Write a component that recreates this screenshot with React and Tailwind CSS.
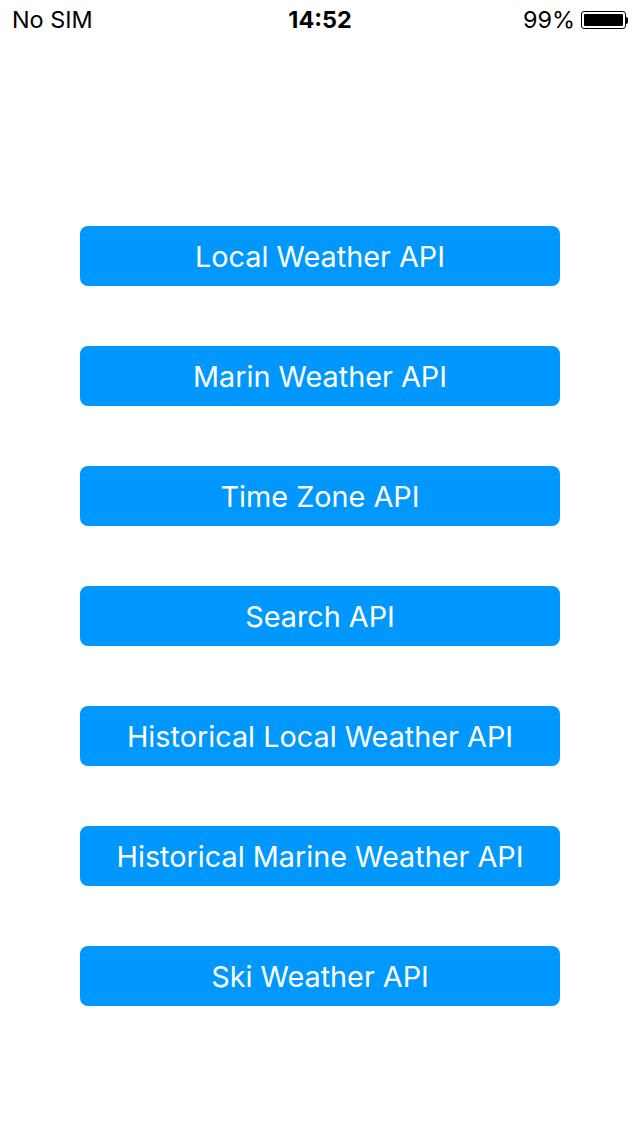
import React from 'react'

const apis = [
  'Local Weather API',
  'Marin Weather API',
  'Time Zone API',
  'Search API',
  'Historical Local Weather API',
  'Historical Marine Weather API',
  'Ski Weather API',
]

function Battery() {
  return (
    <div className="flex items-center">
      <div className="w-[45px] h-[18px] rounded-[3px] border border-black p-[2px]">
        <div className="w-full h-full bg-black rounded-[1px]" />
      </div>
      <div className="w-[2px] h-[7px] bg-black rounded-r-sm" />
    </div>
  )
}

export default function App() {
  return (
    <div className="w-[640px] h-[1136px] bg-white font-['Inter','Liberation_Sans',sans-serif] text-black">
      <div className="h-[40px] flex items-center justify-between px-[12px] text-[23.4px] relative">
        <span className="leading-none">No SIM</span>
        <span className="absolute left-1/2 -translate-x-1/2 font-bold leading-none">14:52</span>
        <div className="flex items-center gap-[6px]">
          <span className="leading-none">99%</span>
          <Battery />
        </div>
      </div>

      <div className="flex flex-col items-center gap-[60px] pt-[186px]">
        {apis.map(name => (
          <button
            key={name}
            className="w-[480px] h-[60px] rounded-[8px] bg-[#0098ff] text-white text-[28.8px] leading-none pt-[2px]"
          >
            {name}
          </button>
        ))}
      </div>
    </div>
  )
}
